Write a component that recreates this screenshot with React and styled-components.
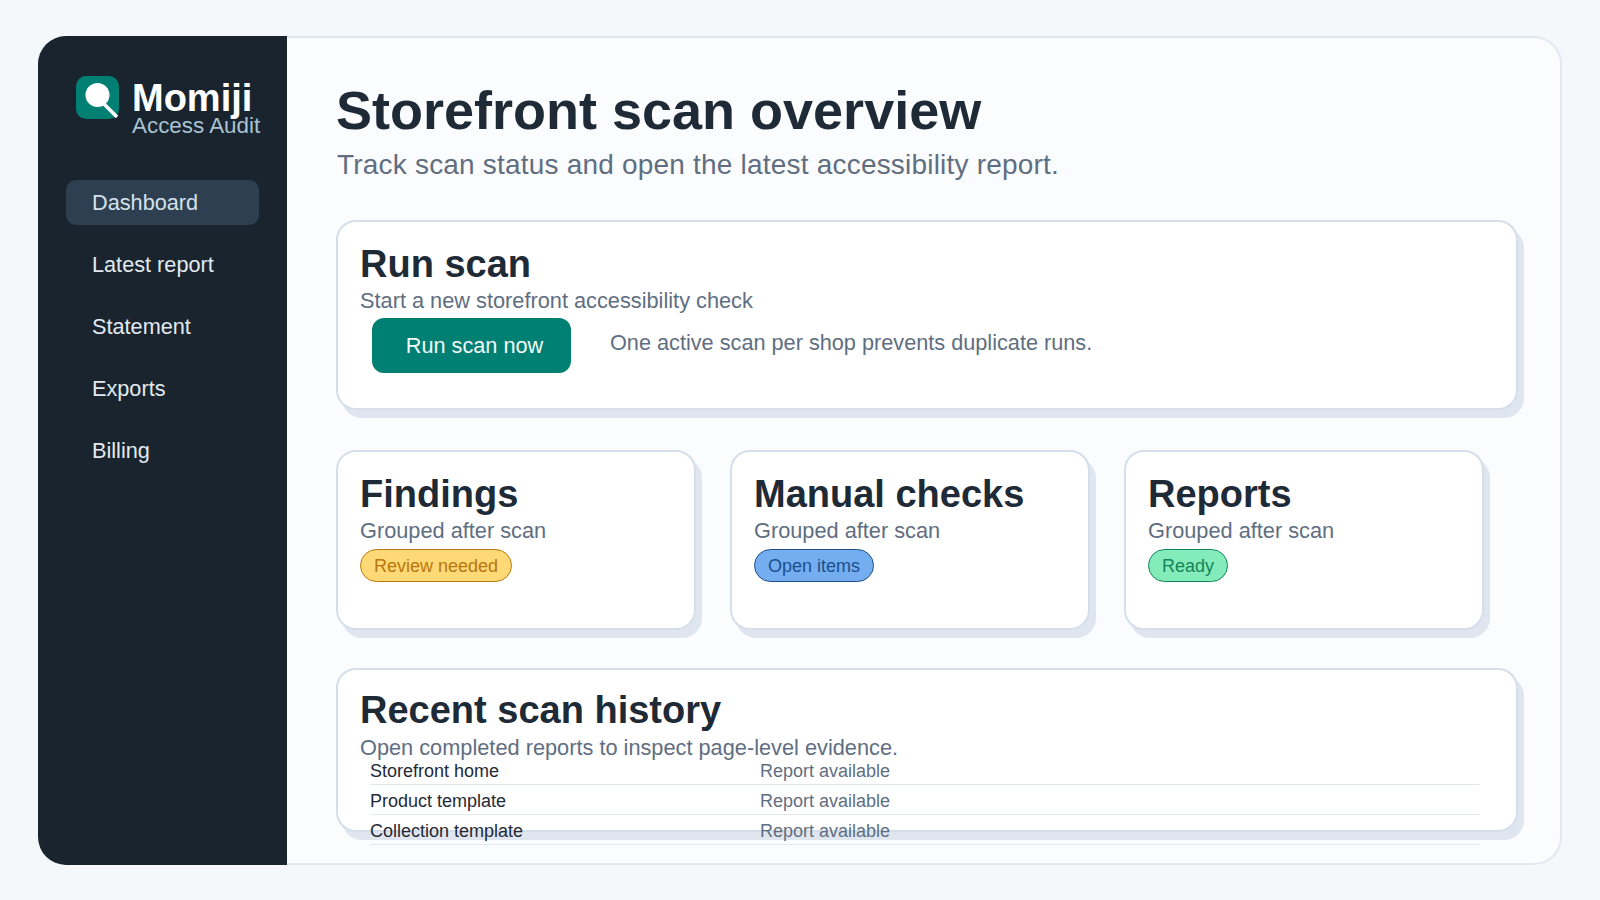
import React from "react";
import styled, { createGlobalStyle } from "styled-components";

const Global = createGlobalStyle`
  html, body { margin: 0; padding: 0; background: #f5f8fb; }
  body { font-family: "Liberation Sans", Arial, sans-serif; }
  * { box-sizing: border-box; }
`;

const Page = styled.div`
  width: 1600px;
  height: 900px;
  padding: 36px 38px;
  overflow: hidden;
`;

const Shell = styled.div`
  display: flex;
  width: 1524px;
  height: 829px;
`;

const Sidebar = styled.aside`
  flex: none;
  width: 249px;
  background: #19242f;
  border-radius: 28px 0 0 28px;
  padding: 40px 28px 0;
`;

const Brand = styled.div`
  display: flex;
  gap: 13px;
  padding-left: 10px;
  height: 63px;
`;

const BrandIcon = styled.svg`
  flex: none;
  width: 43px;
  height: 43px;
`;

const BrandText = styled.div`
  display: flex;
  flex-direction: column;
  margin-top: 1px;
`;

const BrandName = styled.div`
  font-size: 38px;
  font-weight: 700;
  line-height: 42px;
  color: #ffffff;
`;

const BrandSub = styled.div`
  font-size: 22.4px;
  line-height: 22px;
  margin-top: -4px;
  color: #a9c3d2;
  white-space: nowrap;
`;

const Nav = styled.nav`
  display: flex;
  flex-direction: column;
  gap: 17px;
  margin-top: 41px;
`;

const NavItem = styled.div`
  height: 45px;
  width: 193px;
  display: flex;
  align-items: center;
  padding-left: 26px;
  border-radius: 10px;
  font-size: 21.7px;
  color: ${(p) => (p.$active ? "#d5e1ea" : "#e2eaf0")};
  background: ${(p) => (p.$active ? "#2d3f50" : "transparent")};
`;

const Main = styled.main`
  flex: 1;
  min-width: 0;
  background: #fbfcfe;
  border: 2px solid #e1e8f0;
  border-left: 0;
  border-radius: 0 28px 28px 0;
  padding: 38px 0 0 49px;
`;

const Title = styled.h1`
  margin: 0;
  font-size: 54px;
  line-height: 68px;
  font-weight: 700;
  color: #1f2a37;
`;

const Subtitle = styled.p`
  margin: 5px 0 39px 1px;
  font-size: 28px;
  letter-spacing: 0.2px;
  line-height: 32px;
  color: #5f6e81;
`;

const Card = styled.section`
  background: #ffffff;
  border: 2px solid #d5deea;
  border-radius: 20px;
  box-shadow: 6px 8px 0 #dfe6ef;
  padding: ${(p) => p.$top ?? 21}px 22px 0;
  width: ${(p) => p.$w}px;
  height: ${(p) => p.$h}px;
`;

const CardTitle = styled.h2`
  margin: 0;
  font-size: 38px;
  line-height: 43px;
  font-weight: 700;
  color: #1f2a37;
`;

const CardSub = styled.p`
  margin: ${(p) => p.$gap ?? 2}px 0 0;
  font-size: 21.75px;
  line-height: 26px;
  white-space: nowrap;
  color: #5f6e81;
`;

const RunRow = styled.div`
  display: flex;
  align-items: flex-start;
  gap: 39px;
  margin: 4px 0 0 12px;
`;

const RunButton = styled.button`
  width: 199px;
  height: 55px;
  border: 0;
  border-radius: 12px;
  background: #007f73;
  color: #f3fbfa;
  font: 21.7px "Liberation Sans", Arial, sans-serif;
  padding: 0 0 0 6px;
`;

const Hint = styled.span`
  font-size: 21.7px;
  line-height: 26px;
  margin-top: 12px;
  color: #5f6e81;
`;

const CardRow = styled.div`
  display: flex;
  gap: 34px;
  margin: 40px 0 38px;
`;

const Pill = styled.span`
  display: inline-block;
  margin-top: 5px;
  height: 33px;
  line-height: 32px;
  padding: 0 13px;
  border-radius: 17px;
  font-size: 18px;
  border: 1px solid ${(p) => p.$line};
  background: ${(p) => p.$fill};
  color: ${(p) => p.$line};
`;

const Rows = styled.div`
  margin: -6px 14px 0 10px;
`;

const Row = styled.div`
  display: grid;
  grid-template-columns: 390px 1fr;
  height: 30px;
  padding-top: 4px;
  line-height: 24px;
  font-size: 18px;
  border-bottom: 1.5px solid #e1e8f0;
`;

const RowName = styled.span`
  color: #1f2a37;
`;

const RowStatus = styled.span`
  color: #5f6e81;
`;

const tones = {
  warn: { fill: "#ffd976", line: "#b8770f" },
  info: { fill: "#74aef0", line: "#1d4f8c" },
  ok: { fill: "#84ecba", line: "#14855a" },
};

const summary = [
  { title: "Findings", pill: "Review needed", tone: "warn" },
  { title: "Manual checks", pill: "Open items", tone: "info" },
  { title: "Reports", pill: "Ready", tone: "ok" },
];

const nav = ["Dashboard", "Latest report", "Statement", "Exports", "Billing"];
const history = ["Storefront home", "Product template", "Collection template"];

export default function App() {
  return (
    <Page>
      <Global />
      <Shell>
        <Sidebar>
          <Brand>
            <BrandIcon viewBox="0 0 43 43">
              <rect width="43" height="43" rx="10" fill="#007f73" />
              <line x1="26" y1="26" x2="41" y2="41" stroke="#ffffff" strokeWidth="3.5" />
              <circle cx="21.5" cy="19" r="12" fill="#ffffff" />
            </BrandIcon>
            <BrandText>
              <BrandName>Momiji</BrandName>
              <BrandSub>Access Audit</BrandSub>
            </BrandText>
          </Brand>
          <Nav>
            {nav.map((n, i) => (
              <NavItem key={n} $active={i === 0}>{n}</NavItem>
            ))}
          </Nav>
        </Sidebar>
        <Main>
          <Title>Storefront scan overview</Title>
          <Subtitle>Track scan status and open the latest accessibility report.</Subtitle>
          <Card $w={1182} $h={190}>
            <CardTitle>Run scan</CardTitle>
            <CardSub>Start a new storefront accessibility check</CardSub>
            <RunRow>
              <RunButton>Run scan now</RunButton>
              <Hint>One active scan per shop prevents duplicate runs.</Hint>
            </RunRow>
          </Card>
          <CardRow>
            {summary.map((s) => (
              <Card key={s.title} $w={360} $h={180}>
                <CardTitle>{s.title}</CardTitle>
                <CardSub>Grouped after scan</CardSub>
                <Pill $fill={tones[s.tone].fill} $line={tones[s.tone].line}>{s.pill}</Pill>
              </Card>
            ))}
          </CardRow>
          <Card $w={1182} $h={164} $top={19}>
            <CardTitle>Recent scan history</CardTitle>
            <CardSub $gap={3}>Open completed reports to inspect page-level evidence.</CardSub>
            <Rows>
              {history.map((h) => (
                <Row key={h}>
                  <RowName>{h}</RowName>
                  <RowStatus>Report available</RowStatus>
                </Row>
              ))}
            </Rows>
          </Card>
        </Main>
      </Shell>
    </Page>
  );
}
